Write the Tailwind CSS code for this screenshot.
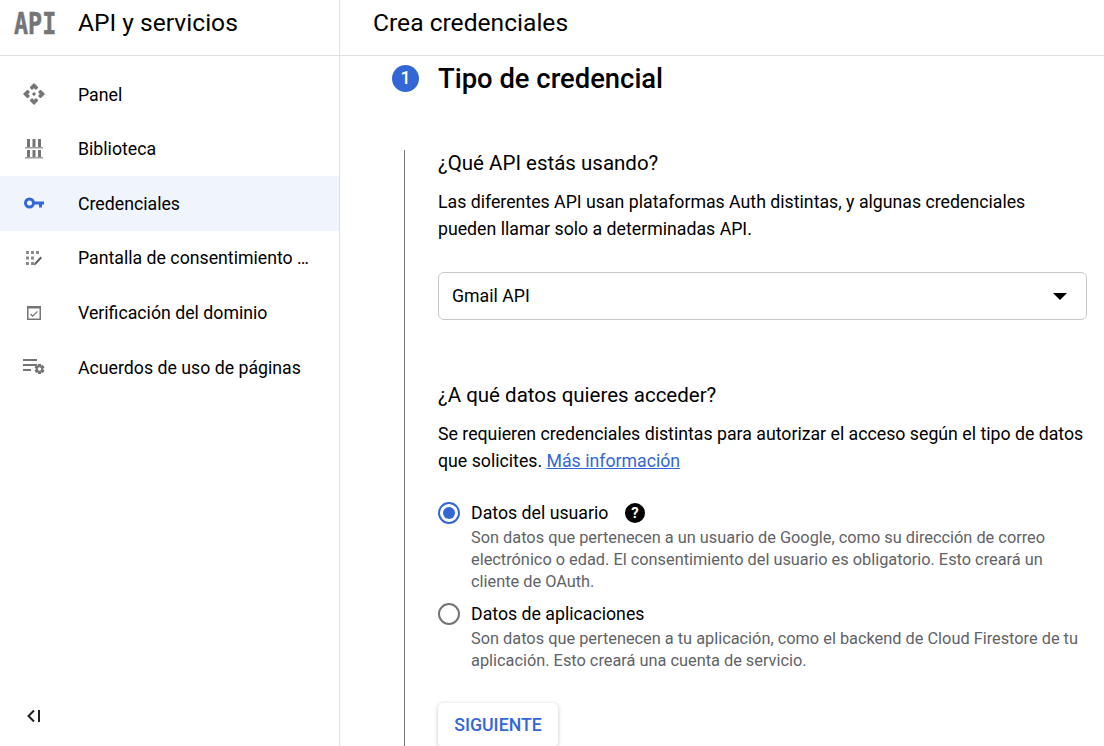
<!DOCTYPE html>
<html lang="es">
<head>
<meta charset="utf-8">
<script src="https://cdn.jsdelivr.net/npm/@tailwindcss/browser@4"></script>
</head>
<body class="bg-white">
<div class="w-[1104px] h-[746px] overflow-hidden flex flex-col font-['Roboto',sans-serif] text-black">
  <header class="h-[56px] shrink-0 flex border-b border-[#e0e0e0]">
    <div class="w-[340px] shrink-0 border-r border-[#e0e0e0] flex items-center pb-[10px]">
      <svg class="ml-[14px]" width="44" height="24" viewBox="0 0 44 24" fill="#757575" stroke="#757575" stroke-width="0.5"><text x="0" y="22.500" transform="scale(0.78 1)" font-family="DejaVu Sans Mono" font-weight="700" font-size="30">API</text></svg>
      <span class="ml-[20px] text-[24.600px] leading-[32px]">API y servicios</span>
    </div>
    <div class="flex items-center pl-[33px] pb-[10px] text-[24.600px] leading-[32px]">Crea credenciales</div>
  </header>
  <div class="flex-1 flex min-h-0">
    <aside class="w-[340px] shrink-0 border-r border-[#e0e0e0] flex flex-col pt-[11px]">
      <nav class="flex flex-col text-[17.730px]">
        <a class="h-[54.6px] flex items-center">
          <span class="w-[68px] flex justify-center"><svg width="22" height="22" viewBox="0 0 22 22" fill="#757575"><path d="M11 0l4 4v1l-2 2-2-1.800L9 7 7 5V4z"/><path d="M11 22l-4-4v-1l2-2 2 1.800 2-1.800 2 2v1zM0 11l4-4h1l2 2-1.800 2L7 13l-2 2H4zM22 11l-4 4h-1l-2-2 1.800-2L15 9l2-2h1z"/><circle cx="11" cy="11" r="1.700"/></svg></span>
          <span class="ml-[10px] translate-y-px">Panel</span>
        </a>
        <a class="h-[54.6px] flex items-center">
          <span class="w-[68px] flex justify-center"><svg width="18" height="20" viewBox="0 0 18 20" fill="#757575"><path d="M2 0h3v8H2zM7.500 0h3v8h-3zM13 0h3v8h-3zM2 11h3v7H2zM7.500 11h3v7h-3zM13 11h3v7h-3z"/><path d="M0 8h18v1.500H0zM0 18h18v1.500H0z" fill="#9e9e9e"/></svg></span>
          <span class="ml-[10px]">Biblioteca</span>
        </a>
        <a class="h-[54.6px] flex items-center bg-[#eff4fd]">
          <span class="w-[68px] flex justify-center"><svg width="20" height="12" viewBox="0 0 20 12" fill="none"><circle cx="5.500" cy="6" r="4" stroke="#3367d6" stroke-width="3"/><path d="M9 4.500h11v3h-2v3h-3v-3H9z" fill="#3367d6"/></svg></span>
          <span class="ml-[10px] translate-y-px">Credenciales</span>
        </a>
        <a class="h-[54.6px] flex items-center">
          <span class="w-[68px] flex justify-center"><svg width="16" height="15" viewBox="0 0 16 15" fill="#8a8a8a"><path d="M0 0h3v3H0zM5 0h3v3H5zM10 0h3v3h-3zM0 5.500h3v3H0zM5 5.500h3v3H5zM0 11h3v3H0zM5 11h3v3H5z"/><path d="M8 14.500l.5-2.500 6-6.500 1.500 1.500-6 6.500z" fill="#616161"/></svg></span>
          <span class="ml-[10px] whitespace-nowrap">Pantalla de consentimiento …</span>
        </a>
        <a class="h-[54.6px] flex items-center">
          <span class="w-[68px] flex justify-center"><svg width="14" height="15" viewBox="0 0 14 15" fill="none" stroke="#757575"><path d="M.75 1.750h12.500v12.500H.75z" stroke-width="1.500"/><path d="M0 1h14v2.500H0z" fill="#757575" stroke="none"/><path d="M3.500 9l2.200 2.200 4.800-4.800" stroke-width="1.300"/></svg></span>
          <span class="ml-[10px] translate-y-px">Verificación del dominio</span>
        </a>
        <a class="h-[54.6px] flex items-center">
          <span class="w-[68px] flex justify-center"><svg width="22" height="16" viewBox="0 0 22 16" fill="#757575"><path d="M0 0h14v2H0zM0 5h14v2H0zM0 10h8v2H0z"/><path fill-rule="evenodd" d="M15 5h3l.4 1.700 1.500-.7 1.600 2.400-1.300 1.100.2.500-.2.500 1.300 1.100-1.600 2.400-1.500-.7-.4 1.700h-3l-.4-1.700-1.500.7-1.600-2.400 1.300-1.100-.2-.5.2-.5-1.300-1.100 1.600-2.400 1.500.7zm1.500 3.300a1.700 1.700 0 1 0 0 3.400 1.700 1.700 0 0 0 0-3.400z"/></svg></span>
          <span class="ml-[10px] translate-y-px">Acuerdos de uso de páginas</span>
        </a>
      </nav>
      <div class="mt-auto h-[60px] flex items-center pl-[27px]">
        <svg width="14" height="14" viewBox="0 0 14 14" fill="none" stroke="#212121"><path d="M7 1.500L1.500 7 7 12.500" stroke-width="2"/><path d="M12 1v12" stroke-width="2"/></svg>
      </div>
    </aside>
    <main class="flex-1 min-w-0 pl-[52px] pt-[9px]">
      <div class="flex items-center h-[27px]">
        <span class="size-[27px] rounded-full bg-[#3367d6] text-white text-[17.730px] font-medium flex items-center justify-center">1</span>
        <h1 class="ml-[19px] text-[27.400px] leading-[27px] font-medium mt-[2px]">Tipo de credencial</h1>
      </div>
      <div class="mt-[58px] ml-[12px] border-l border-[#757575] pl-[33px] pr-[17px] h-[700px]">
        <h2 class="text-[20.500px] leading-[26px]">¿Qué API estás usando?</h2>
        <p class="mt-[13px] text-[17.730px] leading-[27px]">Las diferentes API usan plataformas Auth distintas, y algunas credenciales pueden llamar solo a determinadas API.</p>
        <div class="mt-[29px] h-[48px] border border-[#c8c8c8] rounded-[6px] flex items-center justify-between pl-[13px] pr-[19px] text-[17.730px]">
          <span>Gmail API</span>
          <svg width="14" height="7" viewBox="0 0 14 7" fill="#000"><path d="M0 0h14L7 7z"/></svg>
        </div>
        <h2 class="mt-[62px] text-[20.500px] leading-[26px]">¿A qué datos quieres acceder?</h2>
        <p class="mt-[13px] text-[17.730px] leading-[27px]">Se requieren credenciales distintas para autorizar el acceso según el tipo de datos que solicites. <a class="text-[#3367d6] underline">Más información</a></p>
        <div class="mt-[25px] flex gap-[11px]">
          <span class="mt-[2px] size-[22px] shrink-0 rounded-full border-2 border-[#3367d6] flex items-center justify-center"><span class="size-[12px] rounded-full bg-[#3367d6]"></span></span>
          <div>
            <div class="flex items-center text-[17.730px] leading-[27px]">Datos del usuario
              <svg class="ml-[17px] -mt-[1px]" width="20" height="20" viewBox="0 0 20 20"><circle cx="10" cy="10" r="10" fill="#000"/><text x="10" y="15" text-anchor="middle" fill="#fff" font-size="15" font-weight="700" font-family="Roboto">?</text></svg>
            </div>
            <p class="text-[16.340px] leading-[22px] text-[#5f6368]">Son datos que pertenecen a un usuario de Google, como su dirección de correo electrónico o edad. El consentimiento del usuario es obligatorio. Esto creará un cliente de OAuth.</p>
          </div>
        </div>
        <div class="mt-[8px] flex gap-[11px]">
          <span class="mt-[2px] size-[22px] shrink-0 rounded-full border-2 border-[#757575]"></span>
          <div>
            <div class="text-[17.730px] leading-[27px]">Datos de aplicaciones</div>
            <p class="text-[16.340px] leading-[22px] text-[#5f6368]">Son datos que pertenecen a tu aplicación, como el backend de Cloud Firestore de tu aplicación. Esto creará una cuenta de servicio.</p>
          </div>
        </div>
        <button class="mt-[31px] w-[120px] h-[44px] rounded-[5px] bg-white shadow-[0_1px_4px_rgba(60,64,67,0.3)] text-[#3367d6] text-[17.730px] font-medium">SIGUIENTE</button>
      </div>
    </main>
  </div>
</div>
</body>
</html>
